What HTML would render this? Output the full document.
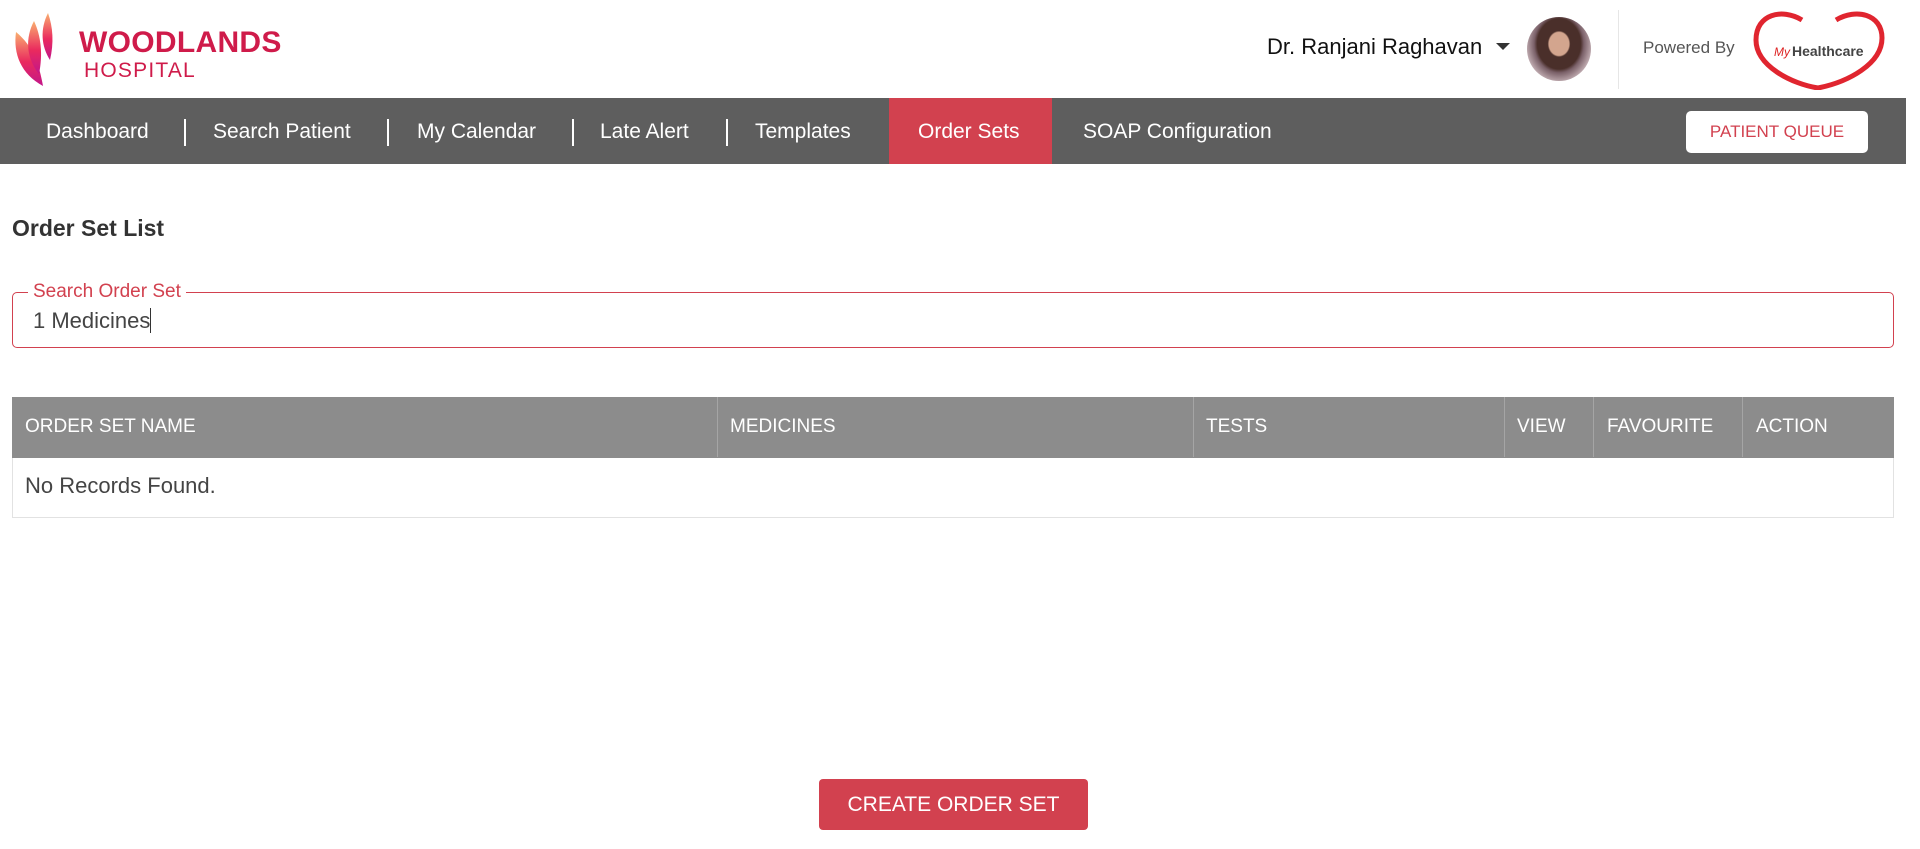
<!DOCTYPE html>
<html><head><meta charset="utf-8"><style>
*{box-sizing:border-box;margin:0;padding:0}
body{width:1920px;height:849px;background:#fff;font-family:"Liberation Sans",Arial,sans-serif;position:relative;overflow:hidden}
.a{position:absolute;white-space:nowrap}
.nav{position:absolute;left:0;top:98px;width:1906px;height:66px;background:#5e5e5e}
.ni{position:absolute;top:0;height:66px;line-height:68px;color:#fff;font-size:21px}
.sep{position:absolute;top:21px;width:2px;height:27px;background:#fff}
.th{position:absolute;top:0;height:60px;line-height:60px;color:#fff;font-size:19px}
.tb{position:absolute;top:0;width:1px;height:60px;background:#a5a5a5}
</style></head><body>
<svg class="a" style="left:13px;top:12px" width="50" height="76" viewBox="0 0 50 76">
<defs><linearGradient id="g" x1="0" y1="0" x2="0" y2="1"><stop offset="0" stop-color="#f9b070"/><stop offset="0.55" stop-color="#ea2a5e"/><stop offset="1" stop-color="#c2168a"/></linearGradient></defs>
<path d="M3 20 C0 42 8 62 30 74 C26 52 20 34 3 20Z" fill="url(#g)"/>
<path d="M21 9 C12 26 13 46 26 62 C30 42 28 24 21 9Z" fill="url(#g)"/>
<path d="M35 1 C27 17 28 34 37 48 C41 31 40 15 35 1Z" fill="url(#g)"/>
</svg>
<div class="a" style="left:79px;top:26px;font-size:30px;font-weight:bold;color:#cf1b4a;letter-spacing:0.3px">WOODLANDS</div>
<div class="a" style="left:84px;top:59px;font-size:21px;color:#cf1b4a;letter-spacing:1.2px">HOSPITAL</div>
<div class="a" style="left:1267px;top:34px;font-size:22px;color:#111">Dr. Ranjani Raghavan</div>
<div class="a" style="left:1496px;top:43px;width:0;height:0;border-left:7px solid transparent;border-right:7px solid transparent;border-top:7px solid #333"></div>
<div class="a" style="left:1527px;top:17px;width:64px;height:64px;border-radius:50%;background:radial-gradient(ellipse at 50% 42%,#d3a58e 0 22%,#4a2f2a 25% 48%,#7a6068 55%,#c7b3b8 75%)"></div>
<div class="a" style="left:1618px;top:10px;width:1px;height:79px;background:#e6e6e6"></div>
<div class="a" style="left:1643px;top:38px;font-size:17px;color:#555">Powered By</div>
<svg class="a" style="left:1752px;top:10px" width="134" height="80" viewBox="0 0 134 80">
<path d="M50 10 C30 -2 4 4 4 30 C4 56 40 74 66 78 C96 72 130 54 130 28 C130 4 104 -2 84 10" fill="none" stroke="#e0252f" stroke-width="5"/>
<text x="22" y="46" font-family="Liberation Sans,sans-serif" font-size="12" fill="#d22" font-style="italic">My</text>
<text x="40" y="46" font-family="Liberation Sans,sans-serif" font-size="14" font-weight="bold" fill="#444">Healthcare</text>
</svg>
<div class="nav">
<div class="ni" style="left:46px">Dashboard</div><div class="sep" style="left:184px"></div>
<div class="ni" style="left:213px">Search Patient</div><div class="sep" style="left:387px"></div>
<div class="ni" style="left:417px">My Calendar</div><div class="sep" style="left:572px"></div>
<div class="ni" style="left:600px">Late Alert</div><div class="sep" style="left:726px"></div>
<div class="ni" style="left:755px">Templates</div>
<div class="a" style="left:889px;top:0;width:163px;height:66px;background:#d2414f"></div>
<div class="ni" style="left:918px">Order Sets</div>
<div class="ni" style="left:1083px">SOAP Configuration</div>
<div class="a" style="left:1686px;top:13px;width:182px;height:42px;background:#fff;border-radius:5px;color:#d2414f;font-size:17px;text-align:center;line-height:42px">PATIENT QUEUE</div>
</div>
<div class="a" style="left:12px;top:215px;font-size:23px;font-weight:bold;color:#333">Order Set List</div>
<div class="a" style="left:12px;top:292px;width:1882px;height:56px;border:1px solid #d2414f;border-radius:5px"></div>
<div class="a" style="left:28px;top:281px;background:#fff;padding:0 5px;font-size:19px;color:#d2414f">Search Order Set</div>
<div class="a" style="left:33px;top:308px;font-size:22px;color:#444">1 Medicines<span style="display:inline-block;width:1px;height:25px;background:#333;vertical-align:-5px"></span></div>
<div class="a" style="left:12px;top:397px;width:1882px;height:121px;border:1px solid #e2e2e2">
<div class="a" style="left:-1px;top:-1px;width:1882px;height:61px;background:#8c8c8c">
<div class="th" style="left:13px">ORDER SET NAME</div><div class="tb" style="left:705px"></div>
<div class="th" style="left:718px">MEDICINES</div><div class="tb" style="left:1181px"></div>
<div class="th" style="left:1194px">TESTS</div><div class="tb" style="left:1492px"></div>
<div class="th" style="left:1505px">VIEW</div><div class="tb" style="left:1581px"></div>
<div class="th" style="left:1595px">FAVOURITE</div><div class="tb" style="left:1730px"></div>
<div class="th" style="left:1744px">ACTION</div>
</div>
<div class="a" style="left:12px;top:75px;font-size:22px;color:#444">No Records Found.</div>
</div>
<div class="a" style="left:819px;top:779px;width:269px;height:51px;background:#d2414f;border-radius:4px;color:#fff;font-size:21px;text-align:center;line-height:51px">CREATE ORDER SET</div>
</body></html>
